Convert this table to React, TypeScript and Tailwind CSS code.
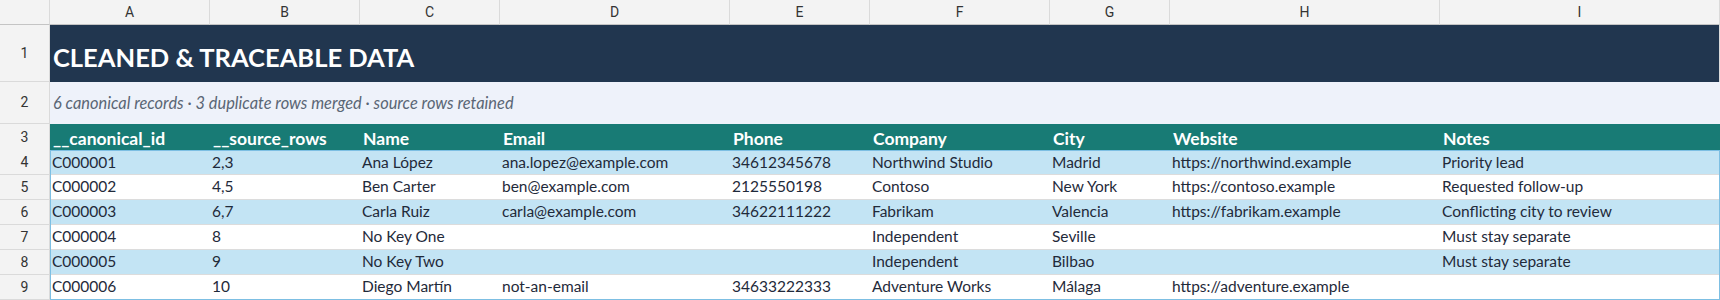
import React from "react";

const cols = ["A", "B", "C", "D", "E", "F", "G", "H", "I"];
const grid = "grid grid-cols-[50px_160px_150px_140px_230px_140px_180px_120px_270px_280px]";

const headers = ["__canonical_id", "__source_rows", "Name", "Email", "Phone", "Company", "City", "Website", "Notes"];

const rows: string[][] = [
  ["C000001", "2,3", "Ana López", "ana.lopez@example.com", "34612345678", "Northwind Studio", "Madrid", "https://northwind.example", "Priority lead"],
  ["C000002", "4,5", "Ben Carter", "ben@example.com", "2125550198", "Contoso", "New York", "https://contoso.example", "Requested follow-up"],
  ["C000003", "6,7", "Carla Ruiz", "carla@example.com", "34622111222", "Fabrikam", "Valencia", "https://fabrikam.example", "Conflicting city to review"],
  ["C000004", "8", "No Key One", "", "", "Independent", "Seville", "", "Must stay separate"],
  ["C000005", "9", "No Key Two", "", "", "Independent", "Bilbao", "", "Must stay separate"],
  ["C000006", "10", "Diego Martín", "not-an-email", "34633222333", "Adventure Works", "Málaga", "https://adventure.example", ""],
];

const body = "font-['Lato','Open_Sans',sans-serif]";
const rh = "flex items-center justify-center bg-[#f3f3f3] border-r border-b border-[#dadada] text-[14px] text-[#333] font-['Roboto','Liberation_Sans',sans-serif]";

export default function App() {
  return (
    <div className="w-[1720px] h-[300px] overflow-hidden bg-white">
      {/* column letters */}
      <div className={`${grid} h-[25px]`}>
        <div className="bg-[#f3f3f3] border-r border-b border-r-[#dadada] border-b-[#c4c4c4]" />
        {cols.map((c) => (
          <div
            key={c}
            className="flex items-center justify-center bg-[#f3f3f3] border-r border-b border-r-[#dadada] border-b-[#c4c4c4] text-[14px] text-[#333] font-['Roboto','Liberation_Sans',sans-serif]"
          >
            {c}
          </div>
        ))}
      </div>
      {/* row 1 */}
      <div className={`${grid} h-[57px]`}>
        <div className={rh}>1</div>
        <div className={`col-span-9 bg-[#21364f] border-r border-[#dadada] flex items-center pl-[3px] pt-[7px] ${body} text-[25.5px] font-bold text-white`}>
          CLEANED &amp; TRACEABLE DATA
        </div>
      </div>
      {/* row 2 */}
      <div className={`${grid} h-[42px]`}>
        <div className={rh}>2</div>
        <div className={`col-span-9 bg-[#eef2fa] flex items-center pl-[3px] ${body} text-[16.4px] italic text-[#5a6675]`}>
          6 canonical records · 3 duplicate rows merged · source rows retained
        </div>
      </div>
      {/* row 3 */}
      <div className={`${grid} h-[26px]`}>
        <div className={rh}>3</div>
        {headers.map((h) => (
          <div key={h} className={`bg-[#187b75] flex items-center pl-[3px] pt-[2px] ${body} text-[17.5px] font-bold text-white whitespace-nowrap`}>
            {h}
          </div>
        ))}
      </div>
      {/* data rows */}
      <div className="flex">
        <div className="w-[50px] flex flex-col">
          {rows.map((_, i) => (
            <div key={i} className={`${rh} h-[25px]`}>
              {i + 4}
            </div>
          ))}
        </div>
        <div className="w-[1670px] border border-[#7dbfe3] flex flex-col">
          {rows.map((r, i) => (
            <div
              key={i}
              className={`grid grid-cols-[159px_150px_140px_230px_140px_180px_120px_270px_279px] ${i === 5 ? "h-[23px]" : i === 0 ? "h-[24px] border-b border-[#dcdcdc]" : "h-[25px] border-b border-[#dcdcdc]"} ${i % 2 === 0 ? "bg-[#c3e4f4]" : "bg-white"}`}
            >
              {r.map((c, j) => (
                <div key={j} className={`flex items-center ${j === 0 ? "pl-[1px]" : "pl-[2px]"} ${body} text-[15.5px] text-[#1f2a3a] whitespace-nowrap`}>
                  {c}
                </div>
              ))}
            </div>
          ))}
        </div>
      </div>
    </div>
  );
}
